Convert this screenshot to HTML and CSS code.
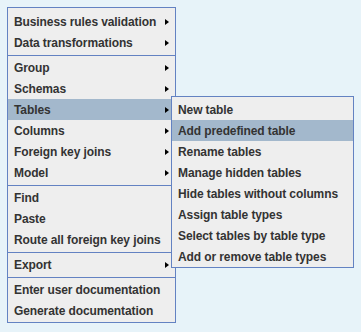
FILE: index.html
```html
<!DOCTYPE html>
<html>
<head>
	<meta charset="utf-8">
	<title>Menu</title>
	<link rel="stylesheet" href="styles.css">
</head>
<body>
	<ul class="menu">
		<li class="item sub">Business rules validation</li>
		<li class="item sub">Data transformations</li>
		<li class="sep"></li>
		<li class="item sub">Group</li>
		<li class="item sub">Schemas</li>
		<li class="item sub active">Tables
			<ul class="menu submenu">
				<li class="item">New table</li>
				<li class="item active">Add predefined table</li>
				<li class="item">Rename tables</li>
				<li class="item">Manage hidden tables</li>
				<li class="item">Hide tables without columns</li>
				<li class="item">Assign table types</li>
				<li class="item">Select tables by table type</li>
				<li class="item">Add or remove table types</li>
			</ul>
		</li>
		<li class="item sub">Columns</li>
		<li class="item sub">Foreign key joins</li>
		<li class="item sub">Model</li>
		<li class="sep"></li>
		<li class="item">Find</li>
		<li class="item">Paste</li>
		<li class="item">Route all foreign key joins</li>
		<li class="sep"></li>
		<li class="item sub">Export</li>
		<li class="sep"></li>
		<li class="item">Enter user documentation</li>
		<li class="item">Generate documentation</li>
	</ul>
</body>
</html>
```

FILE: styles.css
```css
body {
	margin: 0;
	padding: 7px;
	background: #e7f3f9;
	font-family: "Liberation Sans", Arial, sans-serif;
	font-size: 12px;
	font-weight: bold;
	color: #333;
}

ul {
	margin: 0;
	padding: 0;
	list-style: none;
}

.menu {
	width: 167px;
	padding: 3px 0 1px;
	border: 1px solid #6382c2;
	background: #eeeeee;
}

.menu .item {
	position: relative;
	height: 21px;
	line-height: 22px;
	padding-left: 6px;
	white-space: nowrap;
	letter-spacing: -0.1px;
}

.menu .active {
	background: #a3b8cc;
}

/* small black arrow for items with a submenu */
.menu .sub::after {
	content: "";
	position: absolute;
	right: 6px;
	top: 8px;
	border-left: 4px solid #000;
	border-top: 3.5px solid transparent;
	border-bottom: 3.5px solid transparent;
}

.menu .sep {
	height: 1px;
	margin: 2px 0 1px;
	background: #6382c2;
}

.submenu {
	position: absolute;
	left: 163px;
	top: -3px;
	width: 181px;
	padding: 2px 0 0;
	z-index: 2;
}
```
